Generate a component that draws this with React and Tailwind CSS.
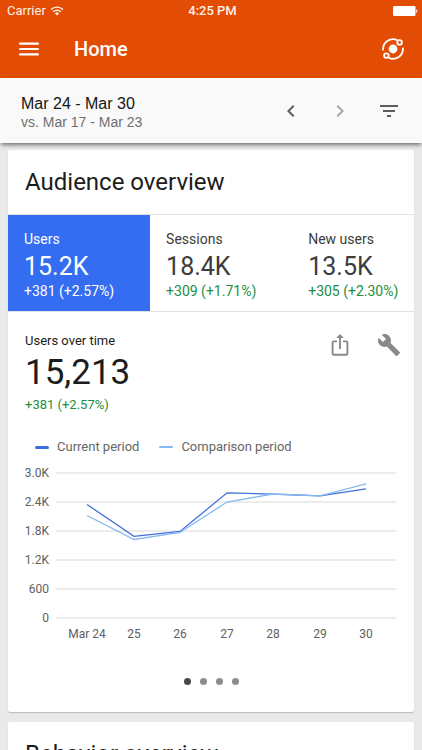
import { useState } from 'react';
import clsx from 'clsx';
import {
  MdBuild,
  MdChevronLeft,
  MdChevronRight,
  MdFilterList,
  MdMenu,
} from 'react-icons/md';

const metrics = [
  { label: 'Users', value: '15.2K', change: '+381 (+2.57%)' },
  { label: 'Sessions', value: '18.4K', change: '+309 (+1.71%)' },
  { label: 'New users', value: '13.5K', change: '+305 (+2.30%)' },
];

const days = ['Mar 24', '25', '26', '27', '28', '29', '30'];
const current = [2350, 1690, 1790, 2590, 2565, 2525, 2670];
const comparison = [2120, 1625, 1770, 2400, 2565, 2525, 2775];

const ticks = [
  { value: 3000, label: '3.0K' },
  { value: 2400, label: '2.4K' },
  { value: 1800, label: '1.8K' },
  { value: 1200, label: '1.2K' },
  { value: 600, label: '600' },
  { value: 0, label: '0' },
];

// Chart scales
const xFor = (index) => Math.round(62 + index * 46.5);
const yFor = (value) => 153 - (value / 3000) * 145;
const toPoints = (series) => series.map((v, i) => `${xFor(i)},${yFor(v)}`).join(' ');

const WifiIcon = () => (
  <svg viewBox="0 0 14 10" className="w-[14px] h-[10px]" fill="none" stroke="currentColor">
    <path d="M1 3.6a8.6 8.6 0 0 1 12 0" strokeWidth="1.4" />
    <path d="M3.1 5.8a5.6 5.6 0 0 1 7.8 0" strokeWidth="1.4" />
    <path d="M7 9.6 4.9 7.4a3 3 0 0 1 4.2 0z" fill="currentColor" stroke="none" />
  </svg>
);

const BatteryIcon = () => (
  <svg viewBox="0 0 25 10" className="w-[25px] h-[10px]" fill="currentColor">
    <rect width="22.5" height="10" rx="1.2" />
    <path d="M23.2 3.2c1.6.3 1.6 3.3 0 3.6z" />
  </svg>
);

const InsightsIcon = () => (
  <svg viewBox="0 0 24 24" className="w-6 h-6" fill="none" stroke="currentColor" strokeWidth="1.8">
    <circle cx="12" cy="12" r="4.4" fill="currentColor" stroke="none" />
    <circle cx="18.6" cy="5.4" r="2.3" />
    <circle cx="5.4" cy="18.6" r="2.3" />
    <path d="M2.2 13.4A9.9 9.9 0 0 1 16.4 3.2" />
    <path d="M21.8 10.6A9.9 9.9 0 0 1 7.6 20.8" />
  </svg>
);

const ShareIcon = () => (
  <svg viewBox="0 0 24 24" className="w-6 h-6" fill="none" stroke="currentColor" strokeWidth="1.9">
    <path d="M9 8.4H5.6a1 1 0 0 0-1 1v11.4a1 1 0 0 0 1 1h12.8a1 1 0 0 0 1-1V9.400a1 1 0 0 0-1-1H15" />
    <path d="M12 16V3" />
    <path d="M8.200 4.900 12 .9l3.800 4z" fill="currentColor" stroke="none" />
  </svg>
);

const Header = () => (
  <header className="bg-[#e24c05] text-white">
    <div className="grid grid-cols-3 items-center h-[22px] pl-[7px] pr-1 text-[13px] leading-4 text-[#fff0e6]">
      <div className="flex items-center gap-1">
        <span>Carrier</span>
        <WifiIcon />
      </div>
      <span className="text-center font-medium">4:25 PM</span>
      <div className="flex justify-end text-white">
        <BatteryIcon />
      </div>
    </div>
    <div className="flex items-center h-14 pl-4 pr-[17px] pb-[2px]">
      <button aria-label="Menu">
        <MdMenu className="w-[26px] h-[26px]" />
      </button>
      <h1 className="flex-1 pl-8 text-xl font-medium">Home</h1>
      <button aria-label="Insights">
        <InsightsIcon />
      </button>
    </div>
  </header>
);

const DateBar = () => (
  <div className="relative flex items-center h-[65px] px-[21px] bg-[#f9f9f9] shadow-[0_3px_4px_-1px_rgba(0,0,0,0.5)]">
    <div className="flex-1 pt-1 font-['Liberation_Sans',Arial,sans-serif]">
      <p className="text-base leading-[18px] text-[#151515]">Mar 24 - Mar 30</p>
      <p className="text-sm leading-[18px] text-[#707070]">vs. Mar 17 - Mar 23</p>
    </div>
    <div className="flex gap-[25px] text-[#5c5c5c]">
      <button aria-label="Previous period">
        <MdChevronLeft className="w-6 h-6" />
      </button>
      <button aria-label="Next period" className="text-[#a8a8a8]">
        <MdChevronRight className="w-6 h-6" />
      </button>
      <button aria-label="Filter">
        <MdFilterList className="w-6 h-6" />
      </button>
    </div>
  </div>
);

const MetricTabs = ({ selected, onSelect }) => (
  <div role="tablist" className="grid grid-cols-[35%_35%_30%] border-y border-[#e2e2e2]">
    {metrics.map((metric, index) => {
      const active = index === selected;
      return (
        <button
          key={metric.label}
          role="tab"
          aria-selected={active}
          onClick={() => onSelect(index)}
          className={clsx(
            'flex flex-col items-start pl-4 pt-4 pb-3 whitespace-nowrap',
            active ? 'bg-[#346df1] text-white' : 'text-[#3c3c3c]'
          )}
        >
          <span className="text-sm leading-4">{metric.label}</span>
          <span className="pt-1 text-[25px] leading-8">{metric.value}</span>
          <span className={clsx('text-sm leading-4', !active && 'text-[#1e8e3e]')}>
            {metric.change}
          </span>
        </button>
      );
    })}
  </div>
);

const Legend = () => (
  <div className="flex gap-5 pl-[10px] text-[13px] leading-4 text-[#666]">
    <div className="flex items-center gap-2">
      <span className="w-[14px] h-[3px] rounded-sm bg-[#3a6fdc]" />
      Current period
    </div>
    <div className="flex items-center gap-2">
      <span className="w-[14px] h-[2px] rounded-sm bg-[#86b9f0]" />
      Comparison period
    </div>
  </div>
);

const UsersChart = () => (
  <svg viewBox="0 0 372 180" className="block w-full" role="img" aria-label="Users over time">
    {ticks.map(({ value, label }) => (
      <g key={value}>
        <line x1="31" x2="371" y1={yFor(value)} y2={yFor(value)} stroke="#d9d9d9" />
        <text x="24" y={yFor(value) + 4} textAnchor="end" fontSize="12" fill="#606060">
          {label}
        </text>
      </g>
    ))}
    {days.map((day, index) => (
      <text key={day} x={xFor(index)} y="173" textAnchor="middle" fontSize="12" fill="#606060">
        {day}
      </text>
    ))}
    <polyline points={toPoints(current)} fill="none" stroke="#3f70dd" strokeWidth="1.3" />
    <polyline points={toPoints(comparison)} fill="none" stroke="#86b9f0" strokeWidth="1.3" />
  </svg>
);

const PageDots = () => (
  <div className="flex justify-center gap-[9px]">
    {[0, 1, 2, 3].map((page) => (
      <button
        key={page}
        aria-label={`Page ${page + 1}`}
        className={clsx('w-[7px] h-[7px] rounded-full', page === 0 ? 'bg-[#484848]' : 'bg-[#8c8c8c]')}
      />
    ))}
  </div>
);

const Card = ({ title, children }) => (
  <section className="bg-white rounded-xs shadow-[0_1px_1px_rgba(0,0,0,0.2)]">
    <h2 className="px-[17px] py-4 text-2xl leading-8 text-[#1c1c1c]">{title}</h2>
    {children}
  </section>
);

const App = () => {
  const [selected, setSelected] = useState(0);

  return (
    <div className="flex flex-col h-screen overflow-hidden bg-[#e9e9e9] font-[Roboto,sans-serif]">
      <Header />
      <DateBar />
      <main className="flex-1 min-h-0 overflow-y-auto [scrollbar-width:none] px-2 pt-[7px]">
        <div className="flex flex-col gap-[10px]">
          <Card title="Audience overview">
            <MetricTabs selected={selected} onSelect={setSelected} />
            <div className="pt-[21px] pb-[27px]">
              <div className="flex items-start justify-between pl-[17px] pr-[13px]">
                <div>
                  <h3 className="text-[13px] leading-4 text-[#1c1c1c]">Users over time</h3>
                  <p className="py-1 text-[35px] leading-10 text-[#1c1c1c]">15,213</p>
                  <p className="text-[13px] leading-4 text-[#1e8e3e]">+381 (+2.57%)</p>
                </div>
                <div className="flex gap-[25px] text-[#8a8a8a]">
                  <button aria-label="Share">
                    <ShareIcon />
                  </button>
                  <button aria-label="Settings">
                    <MdBuild className="w-6 h-6" />
                  </button>
                </div>
              </div>
              <div className="px-[17px] pt-[26px]">
                <Legend />
                <div className="pt-[10px] pb-[33px]">
                  <UsersChart />
                </div>
              </div>
              <PageDots />
            </div>
          </Card>
          <Card title="Behavior overview" />
        </div>
      </main>
    </div>
  );
};

export default App;
